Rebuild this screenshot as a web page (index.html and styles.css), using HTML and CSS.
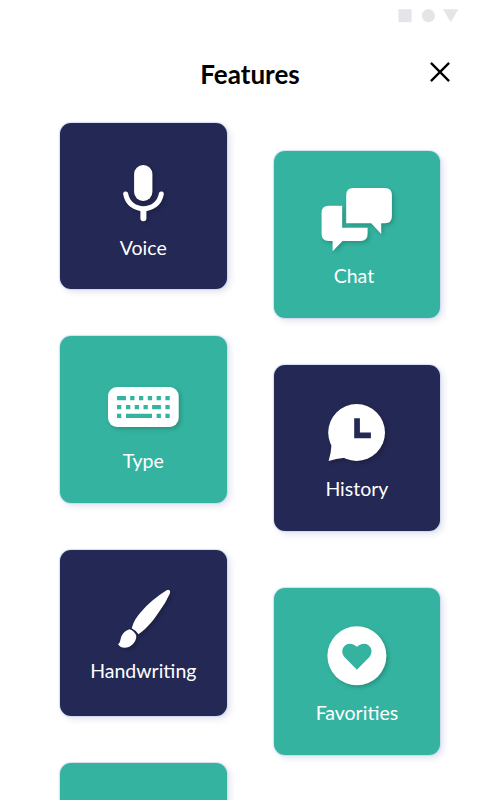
FILE: index.html
```html
<!DOCTYPE html>
<html lang="en">
<head>
    <meta charset="UTF-8">
    <meta name="viewport" content="width=device-width, initial-scale=1.0">
    <title>Features</title>
    <link rel="stylesheet" href="styles.css">
</head>
<body>
    <div class="status-bar">
        <svg width="61" height="14" viewBox="0 0 61 14">
            <rect x="0.4" y="0.2" width="13.2" height="13"/>
            <circle cx="30.4" cy="6.7" r="6.6"/>
            <path d="M45 0.2h15.4l-7.7 13z"/>
        </svg>
    </div>

    <header class="header">
        <h1 class="title">Features</h1>
        <button class="close" aria-label="Close">
            <svg width="20" height="20" viewBox="0 0 20 20">
                <path d="M0.9 0.9l18.2 18.2M19.1 0.9L0.9 19.1"/>
            </svg>
        </button>
    </header>

    <main class="features">
        <div class="column">
            <div class="card navy">
                <svg class="icon" viewBox="0 0 167 112">
                    <rect x="74.1" y="42" width="18.3" height="36" rx="9"/>
                    <path class="line" d="M65.7 71C69 90.5 98 90.5 101.3 71"/>
                    <path class="line stem" d="M83.4 87v8.3"/>
                </svg>
                <span class="label">Voice</span>
            </div>
            <div class="card green">
                <svg class="icon" viewBox="0 0 167 112">
                    <rect x="48" y="51" width="70.7" height="40" rx="9"/>
                    <path class="cut" d="M57 60h9v4.3h-9zM70.2 60h4.3v4.3h-4.3zM79 60h4.3v4.3H79zM87.8 60h4.3v4.3h-4.3zM96.6 60h4.3v4.3h-4.3zM105.4 60h4.3v4.3h-4.3z"/>
                    <path class="cut" d="M57 69h4.3v4.3H57zM66 69h4.3v4.3H66zM74.7 69H79v4.3h-4.3zM83.5 69h4.3v4.3h-4.3zM92.1 69h8.8v4.3h-8.8zM105.4 69h4.3v4.3h-4.3z"/>
                    <path class="cut" d="M57 77.7h4.3V82H57zM66 77.7h26V82H66zM96.6 77.7h4.3V82h-4.3zM105.4 77.7h4.3V82h-4.3z"/>
                </svg>
                <span class="label">Type</span>
            </div>
            <div class="card navy">
                <svg class="icon" viewBox="0 0 167 112">
                    <path d="M106.6 40.3Q108.3 39 109.5 40.3T109.9 43.4Q105.5 53 100 60.5C94.5 68.5 88 78 78.4 84.3Q76 80.5 71.7 78.3C73.5 71.5 77 66.5 80.5 62.5C88 53.500 97 46.500 106.600 40.300z"/>
                    <path d="M69.600 79.200Q74.500 81 76.300 85.700C76.500 92.500 70.500 97.800 64.500 97.800Q60.500 97.800 58 94.300C61 92.500 60 88.500 61.800 85.500Q64.500 80.500 69.600 79.200z"/>
                </svg>
                <span class="label high">Handwriting</span>
            </div>
            <div class="card green"></div>
        </div>

        <div class="column right">
            <div class="card green">
                <svg class="icon" viewBox="-0.6 0 167 112">
                    <path d="M79.6 37h31.7q7 0 7 7v21.3q0 7-7 7h-3.7V83L97.6 72.3h-25V44q0-7 7-7z"/>
                    <path d="M55 54.7h13.6v22H94V83q0 7-7 7H69L59 100.3V90h-4q-7 0-7-7V61.7q0-7 7-7z"/>
                </svg>
                <span class="label shifted">Chat</span>
            </div>
            <div class="card navy">
                <svg class="icon" viewBox="-0.6 0 167 112">
                    <circle cx="83" cy="67.5" r="28.4"/>
                    <path d="M58 79Q57.5 88 55 96q7.5-2.3 16-3.2z"/>
                    <path class="cut" d="M80.6 53.3h5.7v14.3h11v5.6H80.6z"/>
                </svg>
                <span class="label raised">History</span>
            </div>
            <div class="card green lower">
                <svg class="icon" viewBox="-0.6 0 167 112">
                    <circle cx="83.3" cy="67.8" r="29.5"/>
                    <path class="cut" d="M83.3 81.7L71 69.3C64 61 74 50.5 83.3 58.8C92.6 50.5 102.6 61 95.6 69.3z"/>
                </svg>
                <span class="label">Favorities</span>
            </div>
        </div>
    </main>
</body>
</html>
```

FILE: styles.css
```css
:root {
    --navy: #242854;
    --green: #34b4a0;
}

* {
    box-sizing: border-box;
}

html {
    overflow: hidden;
}

body {
    margin: 0;
    height: 800px;
    overflow: hidden;
    background-color: #fff;
    font-family: Lato, Carlito, sans-serif;
}

.status-bar {
    display: flex;
    justify-content: flex-end;
    height: 50px;
    padding: 9px 41px 0 0;
    fill: #e6e4e8;
}

.header {
    display: grid;
    grid-template-columns: 1fr auto 1fr;
    height: 72.6px;
}

.title {
    grid-column: 2;
    margin: 8px 0 0;
    font-size: 26px;
    line-height: 32px;
    font-weight: 700;
    color: #000;
}

.close {
    justify-self: end;
    align-self: start;
    margin: 12px 50px 0 0;
    padding: 0;
    border: 0;
    background: none;
}

.close svg {
    display: block;
    fill: none;
    stroke: #000;
    stroke-width: 2.3;
}

.features {
    display: flex;
    align-items: flex-start;
    gap: 47px;
    padding-left: 60px;
}

.column {
    display: flex;
    flex-direction: column;
    gap: 47px;
}

.right {
    padding-top: 28.5px;
}

.card {
    display: flex;
    flex-direction: column;
    align-items: center;
    width: 166.6px;
    height: 166.6px;
    border-radius: 11px;
    box-shadow: 0 0 1px 1px rgba(190, 205, 240, 0.6), 3px 3px 6px rgba(60, 80, 150, 0.16);
}

.navy {
    background-color: var(--navy);
}

.green {
    background-color: var(--green);
}

.lower {
    margin-top: 10px;
}

.icon {
    width: 167px;
    height: 112px;
    fill: #fff;
    filter: drop-shadow(2px 2px 2px rgba(0, 0, 0, 0.2));
}

.icon .line {
    fill: none;
    stroke: #fff;
    stroke-width: 5;
    stroke-linecap: round;
}

.icon .stem {
    stroke-width: 6;
}

.navy .cut {
    fill: var(--navy);
}

.green .cut {
    fill: var(--green);
}

.label {
    margin-top: 1px;
    font-size: 19.5px;
    line-height: 24px;
    color: #fff;
}

.shifted {
    margin-top: 1.4px;
    margin-right: 6px;
}

.raised {
    margin-top: 0;
}

.high {
    margin-top: -3px;
}
```
